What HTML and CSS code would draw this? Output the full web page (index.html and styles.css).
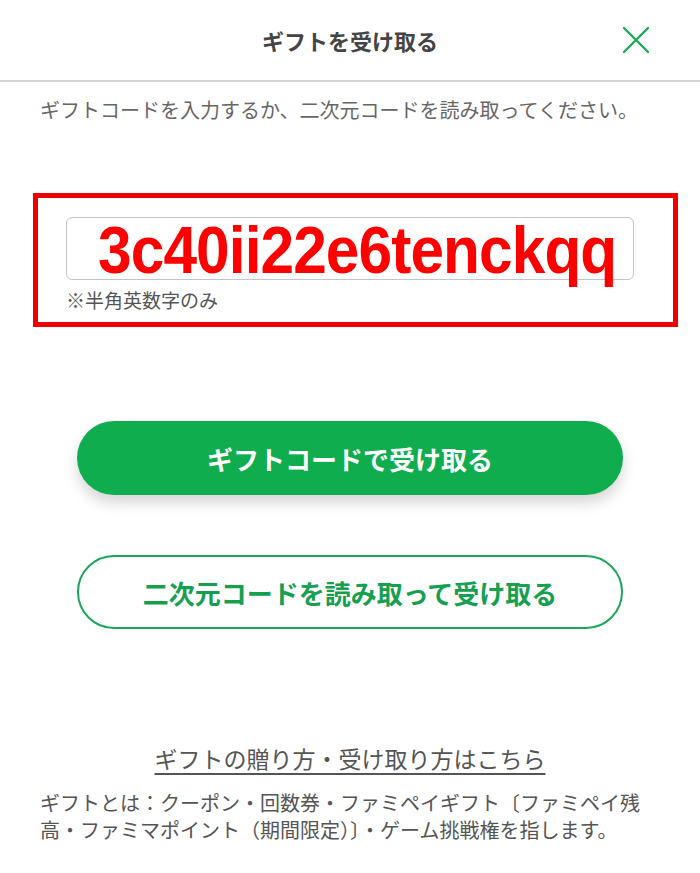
FILE: index.html
```html
<!DOCTYPE html>
<html lang="ja">

<head>
    <meta charset="UTF-8">
    <meta name="viewport" content="width=device-width, initial-scale=1.0">
    <title>ギフトを受け取る</title>
    <link rel="stylesheet" href="styles.css">
</head>

<body>
    <header class="topBar">
        <span></span>
        <h1 class="title">ギフトを受け取る</h1>
        <button class="closeBtn" aria-label="閉じる">
            <svg width="30" height="30" viewBox="0 0 30 30">
                <path d="M3 3 L27 27 M27 3 L3 27" stroke="#1aa75a" stroke-width="2.4" stroke-linecap="round" fill="none"/>
            </svg>
        </button>
    </header>

    <p class="guide">ギフトコードを入力するか、二次元コードを読み取ってください。</p>

    <div class="codeArea">
        <div class="codeInput"><span class="codeValue">3c40ii22e6tenckqq</span></div>
        <p class="note">※半角英数字のみ</p>
    </div>

    <div class="btnWrap">
        <button class="mainBtn">ギフトコードで受け取る</button>
        <button class="subBtn">二次元コードを読み取って受け取る</button>
    </div>

    <a class="howTo" href="#">ギフトの贈り方・受け取り方はこちら</a>
    <p class="desc">ギフトとは：クーポン・回数券・ファミペイギフト〔ファミペイ残高・ファミマポイント（期間限定）〕・ゲーム挑戦権を指します。</p>
</body>

</html>
```

FILE: styles.css
```css
body {
    margin: 0;
    width: 700px;
    background-color: white;
    font-family: "Noto Sans CJK JP", "Noto Sans", sans-serif;
    color: #555;
}
.topBar {
    height: 80px;
    border-bottom: 2px solid #d2d2d2;
    display: grid;
    grid-template-columns: 1fr auto 1fr;
    align-items: center;
}
.title {
    margin: 0;
    font-size: 22px;
    font-weight: bold;
    color: #444;
}
.closeBtn {
    justify-self: end;
    margin-right: 49px;
    width: 30px;
    height: 30px;
    padding: 0;
    border: 0;
    background: none;
    display: flex;
}
.guide {
    margin: 14px 0 0 40px;
    font-size: 20px;
    line-height: 28px;
    color: #666;
}
.codeArea {
    margin: 69px 0 0 33px;
    width: 645px;
    height: 134px;
    border: 5px solid #ee0000;
    padding: 19px 0 0 28px;
    box-sizing: border-box;
}
.codeInput {
    width: 568px;
    height: 63px;
    border: 1px solid #c4c4c4;
    border-radius: 6px;
    box-sizing: border-box;
}
.codeValue {
    display: block;
    padding-left: 34px;
    font-family: "Liberation Sans", sans-serif;
    font-weight: bold;
    font-size: 66px;
    line-height: 61px;
    letter-spacing: -1px;
    color: #ff0000;
    transform: translateY(2px) scaleX(0.915);
    transform-origin: left center;
}
.note {
    margin: 10px 0 0;
    font-size: 19px;
    line-height: 20px;
    color: #555;
}
.btnWrap {
    margin-top: 94px;
    display: flex;
    flex-direction: column;
    align-items: center;
    gap: 60px;
}
.mainBtn, .subBtn {
    width: 546px;
    height: 74px;
    border-radius: 40px;
    font-family: inherit;
    font-size: 26px;
    font-weight: bold;
}
.mainBtn {
    background-color: #10ad4f;
    border: 0;
    color: white;
    box-shadow: 0 8px 14px rgba(0, 0, 0, 0.16);
}
.subBtn {
    background-color: white;
    border: 2px solid #1aa75a;
    color: #15a050;
}
.howTo {
    display: block;
    width: fit-content;
    margin: 113px auto 0;
    font-size: 23px;
    line-height: 32px;
    color: #555;
    text-decoration: underline;
    text-underline-offset: 5px;
}
.desc {
    margin: 15px 40px 0;
    font-size: 20px;
    line-height: 27px;
    color: #555;
}
```
